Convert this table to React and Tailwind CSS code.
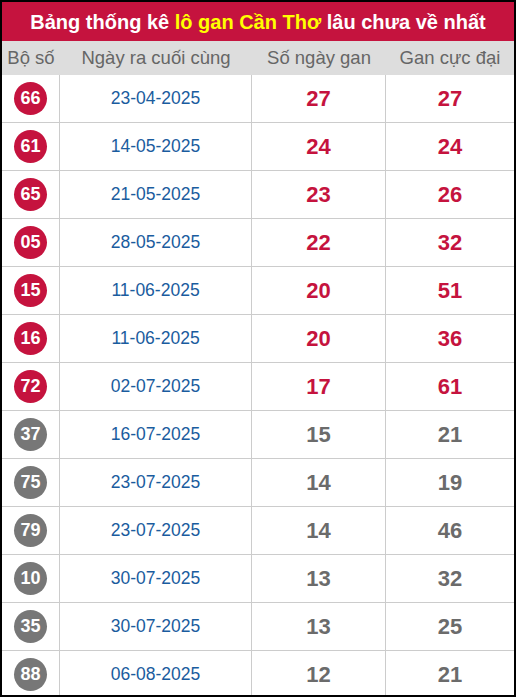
import React from "react";

const rows = [
  ["66", "23-04-2025", "27", "27", true],
  ["61", "14-05-2025", "24", "24", true],
  ["65", "21-05-2025", "23", "26", true],
  ["05", "28-05-2025", "22", "32", true],
  ["15", "11-06-2025", "20", "51", true],
  ["16", "11-06-2025", "20", "36", true],
  ["72", "02-07-2025", "17", "61", true],
  ["37", "16-07-2025", "15", "21", false],
  ["75", "23-07-2025", "14", "19", false],
  ["79", "23-07-2025", "14", "46", false],
  ["10", "30-07-2025", "13", "32", false],
  ["35", "30-07-2025", "13", "25", false],
  ["88", "06-08-2025", "12", "21", false],
];

export default function App() {
  return (
    <div className="w-[516px] h-[697px] bg-white" style={{ fontFamily: '"Liberation Sans", Arial, sans-serif' }}>
      <div className="w-[516px] h-[697px] border-2 border-black overflow-hidden">
        <div className="h-[39px] bg-[#c5133e] flex items-center justify-center text-[20px] font-bold text-white">
          <span>Bảng thống kê&nbsp;</span>
          <span className="text-[#ffff00]">lô gan Cần Thơ</span>
          <span>&nbsp;lâu chưa về nhất</span>
        </div>
        <div className="grid grid-cols-[58px_192px_134px_128px] h-[34px] bg-[#dddddd] text-[#666666] text-[18.5px] items-center text-center">
          <div>Bộ số</div>
          <div>Ngày ra cuối cùng</div>
          <div>Số ngày gan</div>
          <div>Gan cực đại</div>
        </div>
        {rows.map(([n, d, a, b, red], i) => (
          <div key={i} className="grid grid-cols-[58px_192px_134px_128px] h-[48px] shrink-0 border-b border-[#cccccc]">
            <div className="flex items-center justify-center border-r border-[#cccccc]">
              <div className={`w-[33px] h-[33px] rounded-full flex items-center justify-center text-white font-bold text-[18px] ${red ? "bg-[#c5133e]" : "bg-[#777777]"}`}>
                {n}
              </div>
            </div>
            <div className="flex items-center justify-center border-r border-[#cccccc] text-[#1a5c9e] text-[17.5px]">
              {d}
            </div>
            <div className={`flex items-center justify-center border-r border-[#cccccc] font-bold text-[22px] ${red ? "text-[#c5133e]" : "text-[#6b6b6b]"}`}>
              {a}
            </div>
            <div className={`flex items-center justify-center font-bold text-[22px] ${red ? "text-[#c5133e]" : "text-[#6b6b6b]"}`}>
              {b}
            </div>
          </div>
        ))}
      </div>
    </div>
  );
}
